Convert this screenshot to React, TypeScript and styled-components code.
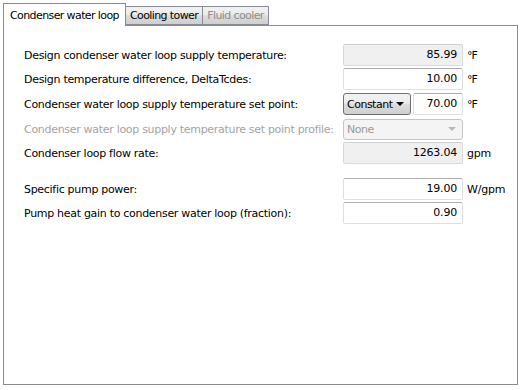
import React from "react";
import styled, { createGlobalStyle } from "styled-components";

const Global = createGlobalStyle`
  html, body { margin: 0; padding: 0; background: #ffffff; }
  body { font-family: "DejaVu Sans", Tahoma, sans-serif; font-size: 10px; color: #000; }
`;

const Root = styled.div`
  width: 523px;
  height: 390px;
  background: #ffffff;
  box-sizing: border-box;
  padding: 3px 5px 5px 3px;
  display: flex;
  flex-direction: column;
`;

const TabStrip = styled.div`
  display: flex;
  align-items: flex-end;
  height: 22px;
  position: relative;
  z-index: 1;
`;

const Tab = styled.div<{ $active?: boolean; $disabled?: boolean }>`
  box-sizing: border-box;
  height: ${(p) => (p.$active ? "23px" : "19px")};
  margin-bottom: ${(p) => (p.$active ? "-1px" : "0")};
  padding: 0 ${(p) => (p.$active ? "6px" : "4px")};
  border: 1px solid #898c95;
  border-bottom: ${(p) => (p.$active ? "none" : "1px solid #898c95")};
  margin-left: -1px;
  background: ${(p) =>
    p.$active
      ? "#ffffff"
      : "linear-gradient(#f2f2f2 0%, #ebebeb 45%, #dddddd 50%, #cfcfcf 100%)"};
  color: ${(p) => (p.$disabled ? "#8d8d8d" : "#000000")};
  display: flex;
  align-items: center;
  white-space: nowrap;
  font-size: 11px;
  letter-spacing: -0.6px;
  &:first-child { margin-left: 0; }
`;

const Panel = styled.div`
  flex: 1;
  border: 1px solid #898c95;
  background: #ffffff;
  box-sizing: border-box;
  padding: 18px 0 0 20px;
`;

const Form = styled.div`
  display: grid;
  grid-template-columns: 319px 120px auto;
  grid-template-rows: 22px 22px 24px 22px 22px 10px 22px 22px;
  row-gap: 2px;
  align-items: center;
`;

const Label = styled.div<{ $disabled?: boolean }>`
  color: ${(p) => (p.$disabled ? "#a3a3a3" : "#000000")};
  font-size: 11px;
  letter-spacing: -0.3px;
  white-space: nowrap;
`;

const Field = styled.div<{ $readOnly?: boolean }>`
  box-sizing: border-box;
  height: 22px;
  border: 1px solid ${(p) => (p.$readOnly ? "#d9d9d9" : "#dcdfe3")};
  border-top-color: ${(p) => (p.$readOnly ? "#cfcfcf" : "#abadb3")};
  background: ${(p) => (p.$readOnly ? "#f0f0f0" : "#ffffff")};
  text-align: right;
  padding: 0 5px;
  line-height: 19px;
  font-size: 11px;
  letter-spacing: -0.2px;
  border-radius: 2px;
`;

const SplitCell = styled.div`
  display: flex;
  gap: 2px;
  height: 22px;
`;

const Combo = styled.div<{ $disabled?: boolean; $width?: number }>`
  box-sizing: border-box;
  width: ${(p) => (p.$width ? `${p.$width}px` : "100%")};
  flex: none;
  height: ${(p) => (p.$disabled ? "21px" : "22px")};
  border: 1px solid ${(p) => (p.$disabled ? "#c5c5c5" : "#707070")};
  border-radius: 3px;
  background: ${(p) =>
    p.$disabled
      ? "#f4f4f4"
      : "linear-gradient(#f3f3f3 0%, #ebebeb 45%, #dddddd 50%, #cfcfcf 100%)"};
  color: ${(p) => (p.$disabled ? "#9a9a9a" : "#000")};
  display: flex;
  align-items: center;
  justify-content: space-between;
  padding: 0 6px 0 3px;
  font-size: 11px;
  letter-spacing: -0.5px;
`;

const Arrow = styled.span<{ $disabled?: boolean }>`
  width: 0;
  height: 0;
  border-left: 4px solid transparent;
  border-right: 4px solid transparent;
  border-top: 4px solid ${(p) => (p.$disabled ? "#b9b9b9" : "#000")};
`;

const Unit = styled.div`
  padding-left: 4px;
  font-size: 11px;
  letter-spacing: -0.2px;
  white-space: nowrap;
`;

const Deg = styled.span`
  letter-spacing: -1px;
`;

const F = () => (
  <Unit>
    <Deg>°</Deg>F
  </Unit>
);

const Spacer = styled.div`
  grid-column: 1 / -1;
`;

const FlexField = styled(Field)`
  flex: 1;
`;

export default function App() {
  return (
    <>
      <Global />
      <Root>
        <TabStrip>
          <Tab $active>Condenser water loop</Tab>
          <Tab>Cooling tower</Tab>
          <Tab $disabled>Fluid cooler</Tab>
        </TabStrip>
        <Panel>
          <Form>
            <Label>Design condenser water loop supply temperature:</Label>
            <Field $readOnly>85.99</Field>
            <F />

            <Label>Design temperature difference, DeltaTcdes:</Label>
            <Field>10.00</Field>
            <F />

            <Label>Condenser water loop supply temperature set point:</Label>
            <SplitCell>
              <Combo $width={68}>
                Constant <Arrow />
              </Combo>
              <FlexField>70.00</FlexField>
            </SplitCell>
            <F />

            <Label $disabled>Condenser water loop supply temperature set point profile:</Label>
            <Combo $disabled>
              None <Arrow $disabled />
            </Combo>
            <div />

            <Label>Condenser loop flow rate:</Label>
            <Field $readOnly>1263.04</Field>
            <Unit>gpm</Unit>

            <Spacer />

            <Label>Specific pump power:</Label>
            <Field>19.00</Field>
            <Unit>W/gpm</Unit>

            <Label>Pump heat gain to condenser water loop (fraction):</Label>
            <Field>0.90</Field>
            <div />
          </Form>
        </Panel>
      </Root>
    </>
  );
}
